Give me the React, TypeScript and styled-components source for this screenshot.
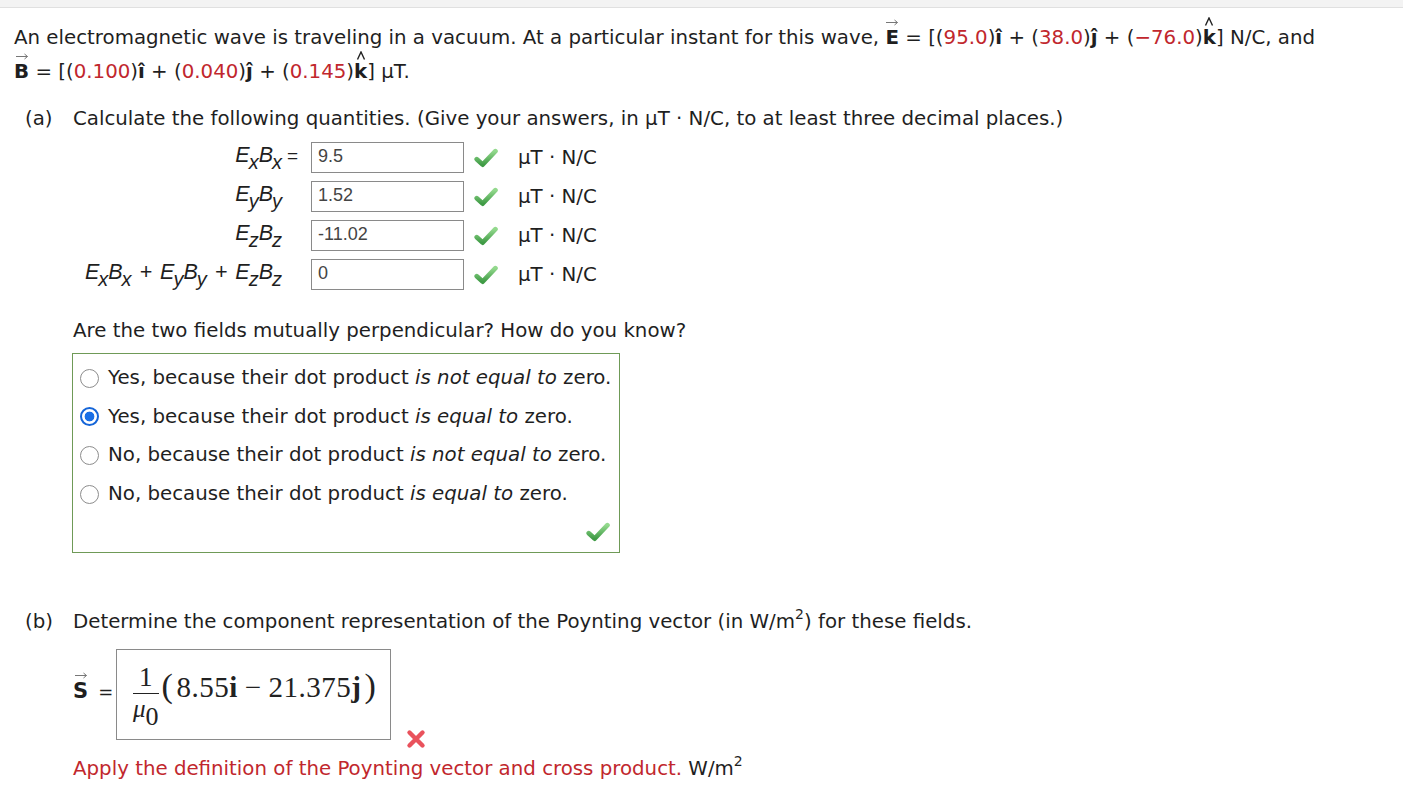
import styled, { createGlobalStyle } from "styled-components";

const TEXT = "#1f1f1f";
const RED = "#c1272d";
const GREEN_BORDER = "#6f9a57";

const GlobalStyle = createGlobalStyle`
  body {
    margin: 0;
    background: #ffffff;
    color: ${TEXT};
    font-family: "DejaVu Sans", Verdana, sans-serif;
  }
`;

type Row = { e: string; b: string; value: string; eq?: boolean };

const rows: Row[] = [
  { e: "x", b: "x", value: "9.5", eq: true },
  { e: "y", b: "y", value: "1.52" },
  { e: "z", b: "z", value: "-11.02" },
];

const choices = [
  { lead: "Yes, because their dot product", em: "is not equal to" },
  { lead: "Yes, because their dot product", em: "is equal to", checked: true },
  { lead: "No, because their dot product", em: "is not equal to" },
  { lead: "No, because their dot product", em: "is equal to" },
];

function Check() {
  return (
    <CheckIcon viewBox="0 0 24 22" aria-hidden>
      <defs>
        <linearGradient id="chk" x1="0" y1="0" x2="0" y2="1">
          <stop offset="0" stopColor="#93d98d" />
          <stop offset="1" stopColor="#3f9b45" />
        </linearGradient>
      </defs>
      <path
        d="M2.8 12.2 L8.6 17.6 L21.4 4.2"
        fill="none"
        stroke="url(#chk)"
        strokeWidth="4.8"
        strokeLinecap="round"
        strokeLinejoin="round"
      />
    </CheckIcon>
  );
}

function Cross() {
  return (
    <CrossIcon viewBox="0 0 22 22" aria-hidden>
      <path
        d="M4.5 4.5 L17.5 17.5 M17.5 4.5 L4.5 17.5"
        fill="none"
        stroke="#e9525c"
        strokeWidth="4.4"
        strokeLinecap="round"
      />
    </CrossIcon>
  );
}

// small accent drawn above a symbol: vector arrow or unit-vector hat
function Accent({ kind, children }: { kind: "arrow" | "hat"; children: React.ReactNode }) {
  return (
    <Accented>
      {kind === "arrow" ? (
        <ArrowSvg viewBox="0 0 14 7" aria-hidden>
          <path d="M1 3.5 H12.5 M9.5 1 L12.5 3.5 L9.5 6" fill="none" stroke="#777" strokeWidth="1" />
        </ArrowSvg>
      ) : (
        <HatSvg viewBox="0 0 10 9" aria-hidden>
          <path d="M1.5 8.5 L5 1 L8.5 8.5" fill="none" stroke="#222" strokeWidth="1.4" />
        </HatSvg>
      )}
      {children}
    </Accented>
  );
}

function Product({ a, b }: { a: string; b: string }) {
  return (
    <>
      E<Sub>{a}</Sub>B<Sub>{b}</Sub>
    </>
  );
}

export default function App() {
  return (
    <>
      <GlobalStyle />
      <TopBar />
      <Page>
        <Intro>
          An electromagnetic wave is traveling in a vacuum. At a particular instant for this wave,{" "}
          <Accent kind="arrow">
            <b>E</b>
          </Accent>{" "}
          = [(<Num>95.0</Num>)<b>î</b> + (<Num>38.0</Num>)<b>ĵ</b> + (<Num>−76.0</Num>)
          <Accent kind="hat">
            <b>k</b>
          </Accent>
          ] N/C, and
          <br />
          <Accent kind="arrow">
            <b>B</b>
          </Accent>{" "}
          = [(<Num>0.100</Num>)<b>î</b> + (<Num>0.040</Num>)<b>ĵ</b> + (<Num>0.145</Num>)
          <Accent kind="hat">
            <b>k</b>
          </Accent>
          ] μT.
        </Intro>

        <Part>
          <PartLabel>(a)</PartLabel>
          <PartBody>
            <Prompt>
              Calculate the following quantities. (Give your answers, in μT · N/C, to at least three
              decimal places.)
            </Prompt>
            <Grid>
              {rows.map((r) => (
                <GridRow key={r.e}>
                  <Label>
                    <Product a={r.e} b={r.b} />
                  </Label>
                  <Equals>{r.eq ? "=" : ""}</Equals>
                  <Answer>{r.value}</Answer>
                  <Check />
                  <Units>μT · N/C</Units>
                </GridRow>
              ))}
              <GridRow>
                <Label>
                  <Product a="x" b="x" /> + <Product a="y" b="y" /> + <Product a="z" b="z" />
                </Label>
                <Equals />
                <Answer>0</Answer>
                <Check />
                <Units>μT · N/C</Units>
              </GridRow>
            </Grid>

            <Question>Are the two fields mutually perpendicular? How do you know?</Question>
            <ChoiceBox>
              {choices.map((c, i) => (
                <Choice key={i}>
                  <Radio $checked={!!c.checked} />
                  <span>
                    {c.lead} <i>{c.em}</i> zero.
                  </span>
                </Choice>
              ))}
              <BoxFooter>
                <Check />
              </BoxFooter>
            </ChoiceBox>
          </PartBody>
        </Part>

        <Part $spaced>
          <PartLabel>(b)</PartLabel>
          <PartBody>
            <Prompt>
              Determine the component representation of the Poynting vector (in W/m<Sup>2</Sup>) for
              these fields.
            </Prompt>
            <MathRow>
              <SLabel>
                <Accent kind="arrow">
                  <SBold>S</SBold>
                </Accent>
                <span>=</span>
              </SLabel>
              <MathBox>
                <Fraction>
                  <Numer>1</Numer>
                  <Denom>
                    <i>μ</i>
                    <DenomSub>0</DenomSub>
                  </Denom>
                </Fraction>
                <Expr>
                  <Paren>(</Paren>8.55<b>i</b>
                  <Minus>−</Minus>21.375<b>j</b>
                  <Paren>)</Paren>
                </Expr>
              </MathBox>
              <Cross />
            </MathRow>
            <Feedback>
              <Hint>Apply the definition of the Poynting vector and cross product.</Hint> W/m
              <Sup>2</Sup>
            </Feedback>
          </PartBody>
        </Part>
      </Page>
    </>
  );
}

const TopBar = styled.div`
  height: 7px;
  background: #f3f3f3;
  border-bottom: 1px solid #e0e0e0;
`;

const Page = styled.div`
  padding: 13px 14px 20px;
  font-size: 19.8px;
`;

const Intro = styled.p`
  margin: 0;
  line-height: 34px;
`;

const Num = styled.span`
  color: ${RED};
`;

const Accented = styled.span`
  position: relative;
  display: inline-block;
  line-height: 1;
`;

const ArrowSvg = styled.svg`
  position: absolute;
  top: -9px;
  left: 50%;
  width: 14px;
  height: 7px;
  transform: translateX(-50%);
`;

const HatSvg = styled.svg`
  position: absolute;
  top: -11px;
  left: 50%;
  width: 10px;
  height: 9px;
  transform: translateX(-50%);
`;

const Part = styled.div<{ $spaced?: boolean }>`
  display: flex;
  margin-top: ${(p) => (p.$spaced ? "57px" : "18px")};
  padding-left: 11px;
`;

const PartLabel = styled.div`
  width: 48px;
  line-height: 24px;
`;

const PartBody = styled.div`
  display: flex;
  flex-direction: column;
`;

const Prompt = styled.div`
  line-height: 24px;
  white-space: nowrap;
`;

const Grid = styled.div`
  display: flex;
  flex-direction: column;
  gap: 8px;
  margin-top: 11px;
`;

const GridRow = styled.div`
  display: grid;
  grid-template-columns: 209px 29px 153px 54px auto;
  align-items: center;
  height: 31px;
`;

const Label = styled.div`
  text-align: right;
  font-family: "Liberation Sans", Arial, sans-serif;
  font-style: italic;
  font-size: 21.5px;
  white-space: nowrap;
  word-spacing: 2px;
  padding-bottom: 4px;
`;

const Sub = styled.sub`
  font-size: 20px;
  vertical-align: -7px;
  line-height: 0;
  margin-left: -1px;
`;

const Equals = styled.div`
  font-family: "Liberation Sans", Arial, sans-serif;
  font-size: 19px;
  text-align: center;
  padding: 0 8px 4px 0;
`;

const Answer = styled.div`
  box-sizing: border-box;
  height: 31px;
  border: 1px solid #8a8a8a;
  padding: 0 6px;
  font-family: "Liberation Sans", Arial, sans-serif;
  font-size: 18px;
  line-height: 27px;
  color: #444;
  background: #fff;
`;

const CheckIcon = styled.svg`
  width: 24px;
  height: 22px;
  margin-left: 10px;
`;

const CrossIcon = styled.svg`
  width: 22px;
  height: 22px;
  align-self: flex-end;
  margin: 0 0 -10px 14px;
`;

const Units = styled.div`
  white-space: nowrap;
`;

const Question = styled.div`
  margin-top: 29px;
  line-height: 24px;
`;

const ChoiceBox = styled.div`
  box-sizing: border-box;
  width: 548px;
  height: 200px;
  margin-top: 10px;
  margin-left: -1px;
  border: 1px solid ${GREEN_BORDER};
  padding: 12px 0 0 7px;
  display: flex;
  flex-direction: column;
  gap: 14.7px;
`;

const Choice = styled.label`
  display: flex;
  align-items: center;
  gap: 9px;
  line-height: 24px;
  white-space: nowrap;
`;

const Radio = styled.span<{ $checked: boolean }>`
  box-sizing: border-box;
  flex: none;
  width: 19px;
  height: 19px;
  border-radius: 50%;
  border: ${(p) => (p.$checked ? "2px solid #1565d8" : "1px solid #8d8d8d")};
  background: ${(p) =>
    p.$checked ? "radial-gradient(circle, #1a6fe6 0 4.6px, #fff 5.2px)" : "#fff"};
`;

const BoxFooter = styled.div`
  display: flex;
  justify-content: flex-end;
  padding-right: 9px;
`;

const Sup = styled.sup`
  font-size: 14px;
  vertical-align: 9px;
  line-height: 0;
`;

const MathRow = styled.div`
  display: flex;
  align-items: center;
  margin-top: 15px;
`;

const SLabel = styled.div`
  width: 43px;
  display: flex;
  align-items: baseline;
  gap: 10px;
  font-size: 18px;
  padding-bottom: 6px;
`;

const SBold = styled.b`
  font-size: 21px;
`;

const MathBox = styled.div`
  box-sizing: border-box;
  width: 275px;
  height: 91px;
  border: 1px solid #8a8a8a;
  display: flex;
  align-items: center;
  padding: 0 0 4px 16px;
  font-family: "Liberation Serif", "DejaVu Serif", serif;
  color: #222;
`;

const Fraction = styled.span`
  display: inline-flex;
  flex-direction: column;
  align-items: center;
  font-size: 27px;
  line-height: 1;
  margin-top: 8px;
`;

const Numer = styled.span`
  padding: 0 6px 2px;
  border-bottom: 1px solid #222;
`;

const Denom = styled.span`
  padding-top: 2px;
  font-size: 25px;
`;

const DenomSub = styled.span`
  font-size: 26px;
  vertical-align: -8px;
`;

const Expr = styled.span`
  font-size: 29px;
  margin-top: -13px;
  white-space: nowrap;
  letter-spacing: 0.5px;
`;

const Minus = styled.span`
  margin: 0 7px;
`;

const Paren = styled.span`
  font-size: 34px;
  margin: 0 3px;
`;

const Feedback = styled.div`
  margin-top: 17px;
  line-height: 24px;
`;

const Hint = styled.span`
  color: ${RED};
`;
